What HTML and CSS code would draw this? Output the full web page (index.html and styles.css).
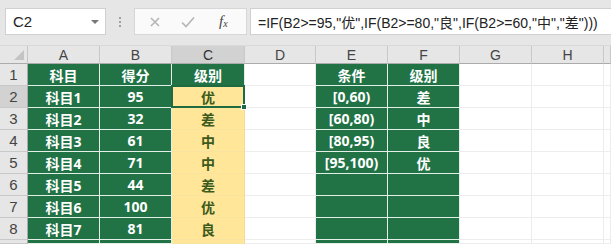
FILE: index.html
```html
<!DOCTYPE html>
<html lang="zh-CN">
<head>
<meta charset="utf-8">
<title>Excel IF</title>
<link rel="stylesheet" href="styles.css">
</head>
<body>
<div class="toolbar">
  <div class="namebox"><span class="ref">C2</span><span class="caret"></span></div>
  <div class="dots"><i></i><i></i><i></i></div>
  <div class="fxbox">
    <svg class="ico" width="14" height="14" viewBox="0 0 14 14"><path d="M3 3 L11 11 M11 3 L3 11" stroke="#b5b5b5" stroke-width="1.6" fill="none"/></svg>
    <svg class="ico" width="16" height="14" viewBox="0 0 16 14"><path d="M2 7.5 L6 11.5 L14 2.5" stroke="#b5b5b5" stroke-width="1.6" fill="none"/></svg>
    <span class="fx">f<sub>x</sub></span>
  </div>
  <div class="formula">=IF(B2&gt;=95,"优",IF(B2&gt;=80,"良",IF(B2&gt;=60,"中","差")))</div>
</div>
<div class="sheet">
  <div class="corner"><span class="tri"></span></div>
  <div class="ch">A</div><div class="ch">B</div><div class="ch sel">C</div><div class="ch">D</div><div class="ch">E</div><div class="ch">F</div><div class="ch">G</div><div class="ch">H</div><div class="ch"></div>

  <div class="rh">1</div>
  <div class="g">科目</div><div class="g">得分</div><div class="g">级别</div><div class="w"></div><div class="g">条件</div><div class="g">级别</div><div class="w"></div><div class="w"></div><div class="w"></div>

  <div class="rh sel">2</div>
  <div class="g">科目1</div><div class="g">95</div><div class="y active">优<span class="handle"></span></div><div class="w"></div><div class="g">[0,60)</div><div class="g">差</div><div class="w"></div><div class="w"></div><div class="w"></div>

  <div class="rh">3</div>
  <div class="g">科目2</div><div class="g">32</div><div class="y">差</div><div class="w"></div><div class="g">[60,80)</div><div class="g">中</div><div class="w"></div><div class="w"></div><div class="w"></div>

  <div class="rh">4</div>
  <div class="g">科目3</div><div class="g">61</div><div class="y">中</div><div class="w"></div><div class="g">[80,95)</div><div class="g">良</div><div class="w"></div><div class="w"></div><div class="w"></div>

  <div class="rh">5</div>
  <div class="g">科目4</div><div class="g">71</div><div class="y">中</div><div class="w"></div><div class="g">[95,100)</div><div class="g">优</div><div class="w"></div><div class="w"></div><div class="w"></div>

  <div class="rh">6</div>
  <div class="g">科目5</div><div class="g">44</div><div class="y">差</div><div class="w"></div><div class="g"></div><div class="g"></div><div class="w"></div><div class="w"></div><div class="w"></div>

  <div class="rh">7</div>
  <div class="g">科目6</div><div class="g">100</div><div class="y">优</div><div class="w"></div><div class="g"></div><div class="g"></div><div class="w"></div><div class="w"></div><div class="w"></div>

  <div class="rh">8</div>
  <div class="g">科目7</div><div class="g">81</div><div class="y">良</div><div class="w"></div><div class="g"></div><div class="g"></div><div class="w"></div><div class="w"></div><div class="w"></div>

  <div class="rh"></div>
  <div class="g"></div><div class="g"></div><div class="y"></div><div class="w"></div><div class="g"></div><div class="g"></div><div class="w"></div><div class="w"></div><div class="w"></div>
</div>
</body>
</html>
```
FILE: styles.css
```css
* { box-sizing: border-box; }
html, body { margin: 0; padding: 0; }
body {
  width: 611px;
  height: 244px;
  overflow: hidden;
  background: #fff;
  font-family: "Liberation Sans", "Noto Sans CJK SC", sans-serif;
}

.toolbar {
  height: 46px;
  background: #e6e6e6;
  display: flex;
  align-items: flex-start;
  padding: 8px 0 0 5px;
  border-bottom: 1px solid #d9d9d9;
}
.namebox {
  width: 101px;
  height: 27px;
  background: #fff;
  border: 1px solid #d0d0d0;
  display: flex;
  align-items: center;
  justify-content: space-between;
  padding: 0 6px 0 7px;
}
.ref { font-size: 15px; color: #222; }
.caret {
  width: 0; height: 0;
  border-left: 4px solid transparent;
  border-right: 4px solid transparent;
  border-top: 4px solid #777;
}
.dots {
  width: 28px;
  height: 27px;
  display: flex;
  flex-direction: column;
  align-items: center;
  justify-content: center;
  gap: 2px;
}
.dots i { width: 2px; height: 2px; background: #a0a0a0; display: block; }
.fxbox {
  width: 113px;
  height: 27px;
  background: #fafafa;
  border: 1px solid #d6d6d6;
  display: flex;
  align-items: center;
  padding: 0 0 0 13px;
  gap: 18px;
}
.fx {
  font-family: "Liberation Serif", serif;
  font-style: italic;
  font-size: 15px;
  color: #444;
  margin-left: 5px;
}
.fx sub { font-size: 10px; vertical-align: -1px; }
.formula {
  flex: 1;
  min-width: 0;
  height: 27px;
  margin-left: 3px;
  background: #fff;
  border: 1px solid #d0d0d0;
  border-right: none;
  padding: 0 0 0 7px;
  display: flex;
  align-items: center;
  font-size: 14px;
  color: #222;
  white-space: nowrap;
  overflow: hidden;
}

.sheet {
  display: grid;
  grid-template-columns: 28px 72px 72px 73px 71px 72px 72px 72px 72px 7px;
  grid-template-rows: 18px repeat(8, 22px) 4px;
  overflow: hidden;
}
.corner {
  background: #e6e6e6;
  border-right: 1px solid #c6c6c6;
  border-bottom: 1px solid #ababab;
  position: relative;
}
.tri {
  position: absolute;
  right: 3px;
  bottom: 3px;
  width: 0; height: 0;
  border-left: 10px solid transparent;
  border-bottom: 10px solid #c4c4c4;
}
.ch {
  background: #e6e6e6;
  border-right: 1px solid #c9c9c9;
  border-bottom: 1px solid #ababab;
  font-size: 14px;
  color: #444;
  display: flex;
  align-items: center;
  justify-content: center;
  line-height: 1;
}
.ch.sel { background: #d2d2d2; color: #333; }
.rh {
  background: #e6e6e6;
  border-right: 1px solid #ababab;
  border-bottom: 1px solid #c9c9c9;
  font-size: 15px;
  color: #444;
  display: flex;
  align-items: center;
  justify-content: center;
}
.rh.sel { background: #d2d2d2; }

.g, .y, .w {
  display: flex;
  align-items: center;
  justify-content: center;
  font-family: "Open Sans", "Noto Sans CJK SC", sans-serif;
  font-weight: 700;
  font-size: 14px;
}
.g {
  background: #217346;
  color: #fff;
  border-right: 1px solid #e3efe7;
  border-bottom: 1px solid #e3efe7;
}
.y {
  background: #ffe699;
  color: #3d5a1d;
  border-right: 1px solid #f4dc93;
  border-bottom: 1px solid #f9e3a0;
}
.w {
  background: #fff;
  border-right: 1px solid #ededed;
  border-bottom: 1px solid #ededed;
}
.active {
  position: relative;
  border: 2px solid #1e6b41;
  margin: -1px 0 0 -1px;
}
.handle {
  position: absolute;
  right: -4px;
  bottom: -4px;
  width: 6px;
  height: 6px;
  background: #1e6b41;
  border: 1px solid #fff;
}
```
